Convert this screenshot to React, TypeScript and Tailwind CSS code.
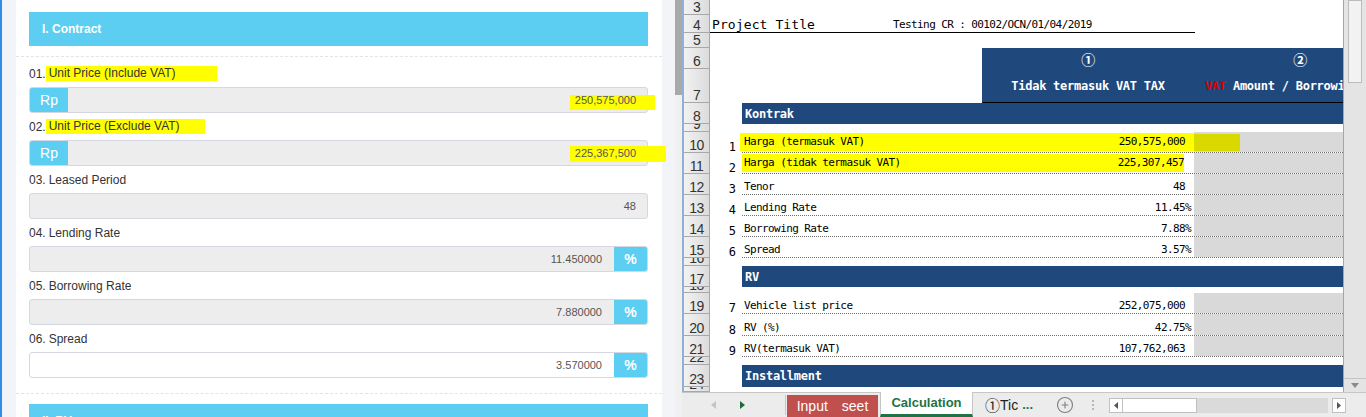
import React from "react";
import { CirclePlus } from "lucide-react";

const MONO = "font-['DejaVu_Sans_Mono','Liberation_Mono',monospace]";

type FieldProps = {
  num: string;
  label: string;
  hlClass?: string;
  value: string;
  addon?: "rp" | "pct";
  white?: boolean;
  valueHl?: string;
};

function Field({ num, label, hlClass, value, addon, white, valueHl }: FieldProps) {
  return (
    <div className="flex flex-col">
      <div className="h-[27px] flex items-center text-[12px] text-[#333]">
        <span>{num}</span>
        {hlClass ? (
          <span className={`inline-block h-[15px] leading-[15px] bg-[#ffff00] pl-[3px] ${hlClass}`}>{label}</span>
        ) : (
          <span className="pl-[3px]">{label}</span>
        )}
      </div>
      <div
        className={`relative h-[26px] flex border border-[#d5d8e0] rounded-[3px] ${white ? "bg-white" : "bg-[#ededed]"}`}
      >
        {addon === "rp" && (
          <div className="w-[38px] shrink-0 bg-[#5ccef1] rounded-l-[2px] flex items-center justify-center text-white text-[14px]">
            Rp
          </div>
        )}
        {valueHl && <div className={`absolute bg-[#ffff00] ${valueHl}`} />}
        <div
          className={`relative flex-1 flex items-center justify-end text-[11px] text-[#555] ${addon === "pct" ? "pr-[12px]" : "pr-[11px]"}`}
        >
          {value}
        </div>
        {addon === "pct" && (
          <div className="w-[33px] shrink-0 bg-[#5ccef1] rounded-r-[2px] flex items-center justify-center text-white text-[14px] font-bold">
            %
          </div>
        )}
      </div>
    </div>
  );
}

function Row({ n, h, children }: { n: number; h: string; children?: React.ReactNode }) {
  return (
    <div className={`flex shrink-0 overflow-hidden ${h}`}>
      <div className="w-[26px] shrink-0 flex items-end justify-center overflow-hidden bg-linear-to-r from-[#f2f2f2] to-[#dcdcdc] border-r border-b border-[#a8a8a8] text-[14px] leading-[13px] text-[#333] font-['Liberation_Sans',Arial,sans-serif]">
        {n}
      </div>
      <div className="flex flex-1 min-w-0 overflow-hidden">{children}</div>
    </div>
  );
}

type DR = {
  n: number;
  h: string;
  num: string;
  label: string;
  value: string;
  pct?: boolean;
  hl?: "full" | "part";
};

function DataRow({ n, h, num, label, value, pct, hl }: DR) {
  const inner =
    hl === "full"
      ? "w-[454px] h-[18px] items-center -ml-[2px] pl-[4px] pr-[9px] bg-[#ffff00]"
      : hl === "part"
        ? "w-[442px] h-[18px] items-center pl-[2px] bg-[#ffff00]"
        : pct
          ? "w-[452px] items-end pl-[2px] pr-[3px]"
          : "w-[452px] items-end pl-[2px] pr-[9px]";
  return (
    <Row n={n} h={h}>
      <div className="w-[12px] shrink-0" />
      <div className="w-[20px] shrink-0 flex items-end justify-center">
        <span className="text-[12px] leading-[11px]">{num}</span>
      </div>
      <div className="flex flex-1 border-b border-dotted border-[#6e6e6e]">
        <div className={`w-[452px] shrink-0 flex ${hl ? "items-center" : "items-end"}`}>
          <div className={`flex justify-between whitespace-nowrap leading-[14px] ${inner}`}>
            <span>{label}</span>
            <span>{value}</span>
          </div>
        </div>
        <div className="flex-1 bg-[#d9d9d9] flex items-center">
          {hl === "full" && <div className="w-[46px] h-[17px] bg-[#d9d900]" />}
        </div>
      </div>
    </Row>
  );
}

function Band({ n, h, text }: { n: number; h: string; text: string }) {
  return (
    <Row n={n} h={h}>
      <div className="w-[32px] shrink-0" />
      <div className="flex-1 bg-[#1f497d] flex items-center pl-[3px] text-white font-bold text-[12px] tracking-[-0.25px]">
        {text}
      </div>
    </Row>
  );
}

export default function App() {
  const rows1: DR[] = [
    { n: 10, h: "h-[21px]", num: "1", label: "Harga (termasuk VAT)", value: "250,575,000", hl: "full" },
    { n: 11, h: "h-[21px]", num: "2", label: "Harga (tidak termasuk VAT)", value: "225,307,457", hl: "part" },
    { n: 12, h: "h-[21px]", num: "3", label: "Tenor", value: "48" },
    { n: 13, h: "h-[21px]", num: "4", label: "Lending Rate", value: "11.45%", pct: true },
    { n: 14, h: "h-[21px]", num: "5", label: "Borrowing Rate", value: "7.88%", pct: true },
    { n: 15, h: "h-[21px]", num: "6", label: "Spread", value: "3.57%", pct: true },
  ];
  const rows2: DR[] = [
    { n: 19, h: "h-[21px]", num: "7", label: "Vehicle list price", value: "252,075,000" },
    { n: 20, h: "h-[22px]", num: "8", label: "RV (%)", value: "42.75%", pct: true },
    { n: 21, h: "h-[21px]", num: "9", label: "RV(termasuk VAT)", value: "107,762,063" },
  ];

  return (
    <div className="flex h-[417px] w-[1366px] overflow-hidden bg-white font-['Liberation_Sans',Arial,sans-serif]">
      {/* LEFT: web form */}
      <div className="flex w-[682px] shrink-0">
        <div className="w-[2px] shrink-0 bg-[#2f8fe8]" />
        <div className="w-[14px] shrink-0 bg-[#f3f4f8]" />
        <div className="w-[646px] shrink-0 bg-white flex flex-col">
          <div className="pl-[13px] pr-[14px] pt-[12px]">
            <div className="h-[34px] bg-[#5ccef1] flex items-center pl-[13px] text-white font-bold text-[12px]">
              I. Contract
            </div>
          </div>
          <div className="mt-[10px] border-t border-dashed border-[#e2e4ea]" />
          <div className="pl-[13px] pr-[14px] pt-[3px] flex flex-col">
            <Field
              num="01."
              label="Unit Price (Include VAT)"
              hlClass="w-[171px]"
              value="250,575,000"
              addon="rp"
              valueHl="left-[540px] top-[7px] w-[85px] h-[15px]"
            />
            <Field
              num="02."
              label="Unit Price (Exclude VAT)"
              hlClass="w-[159px]"
              value="225,367,500"
              addon="rp"
              valueHl="left-[540px] top-[5px] w-[96px] h-[16px]"
            />
            <Field num="03." label="Leased Period" value="48" />
            <Field num="04." label="Lending Rate" value="11.450000" addon="pct" />
            <Field num="05." label="Borrowing Rate" value="7.880000" addon="pct" />
            <Field num="06." label="Spread" value="3.570000" addon="pct" white />
          </div>
          <div className="mt-[15px] border-t border-dashed border-[#e2e4ea]" />
          <div className="pl-[13px] pr-[14px] pt-[10px]">
            <div className="h-[34px] bg-[#5ccef1] flex items-center pl-[13px] text-white font-bold text-[12px]">
              II. RV
            </div>
          </div>
        </div>
        <div className="w-[13px] shrink-0 bg-[#f3f4f8]" />
        <div className="w-[7px] shrink-0 bg-[#f0f0f0] flex flex-col">
          <div className="h-[95px] bg-[#a9a9a9]" />
        </div>
      </div>

      {/* RIGHT: spreadsheet */}
      <div className={`flex flex-col w-[684px] shrink-0 ${MONO} text-[11px] tracking-[-0.6px] text-black`}>
        <div className="flex h-[392px] overflow-hidden">
          <div className="w-[2px] shrink-0 bg-[#8fb1d9]" />
          <div className="w-[659px] shrink-0 flex flex-col overflow-hidden">
            <Row n={3} h="h-[15px]" />
            <Row n={4} h="h-[18px]">
              <div className="w-[485px] shrink-0 border-b border-black flex items-end whitespace-nowrap leading-[15px]">
                <span className="w-[183px] shrink-0 pl-[2px] text-[13px] tracking-[0.1px]">Project Title</span>
                <span>Testing CR : 00102/OCN/01/04/2019</span>
              </div>
            </Row>
            <Row n={5} h="h-[15px]" />
            <Row n={6} h="h-[21px]">
              <div className="w-[272px] shrink-0" />
              <div className="w-[212px] shrink-0 bg-[#1f497d] flex items-center justify-center pt-[2px] text-white text-[14px] font-bold font-['Noto_Sans_CJK_JP',sans-serif]">
                ①
              </div>
              <div className="w-[212px] shrink-0 bg-[#1f497d] flex items-center justify-center pt-[2px] text-white text-[14px] font-bold font-['Noto_Sans_CJK_JP',sans-serif]">
                ②
              </div>
            </Row>
            <Row n={7} h="h-[34px]">
              <div className="w-[272px] shrink-0" />
              <div className="w-[212px] shrink-0 bg-[#1f497d] border-b border-black flex items-center justify-center text-white font-bold text-[12px] tracking-[-0.25px] whitespace-nowrap">
                Tidak termasuk VAT TAX
              </div>
              <div className="w-[212px] shrink-0 bg-[#1f497d] border-b border-black flex items-center pl-[11px] text-white font-bold text-[12px] tracking-[-0.25px] whitespace-nowrap">
                <span className="text-[#d40000]">VAT</span>
                <span>&nbsp;Amount / Borrowing Rate</span>
              </div>
            </Row>
            <Band n={8} h="h-[21px]" text="Kontrak" />
            <Row n={9} h="h-[8px]" />
            {rows1.map((r) => (
              <DataRow key={r.n} {...r} />
            ))}
            <Row n={16} h="h-[8px]" />
            <Band n={17} h="h-[21px]" text="RV" />
            <Row n={18} h="h-[6px]" />
            {rows2.map((r) => (
              <DataRow key={r.n} {...r} />
            ))}
            <Row n={22} h="h-[8px]" />
            <Band n={23} h="h-[22px]" text="Installment" />
            <Row n={24} h="h-[5px]" />
          </div>
          {/* vertical scrollbar */}
          <div className="w-[23px] shrink-0 border-l border-[#a6a6a6] bg-[#e4e4e4] flex flex-col justify-between">
            <div className="mx-[4px] h-[83px] bg-[#f2f2f2] border border-[#bcbcbc]" />
            <div className="h-[14px] border-t border-[#c4c4c4] flex items-center justify-center">
              <svg width="8" height="5" viewBox="0 0 8 5">
                <path d="M0 0 L8 0 L4 5 Z" fill="#8a8a8a" />
              </svg>
            </div>
          </div>
        </div>

        {/* sheet tab bar */}
        <div className="h-[25px] flex items-stretch bg-[#ececec] border-t border-[#c6c6c6] font-['Liberation_Sans','Noto_Sans_CJK_JP',sans-serif] tracking-normal text-[14px]">
          <div className="w-[103px] shrink-0 flex items-center pl-[29px] gap-[24px]">
            <svg width="5" height="8" viewBox="0 0 5 8">
              <path d="M5 0 L0 4 L5 8 Z" fill="#c4c4c4" />
            </svg>
            <svg width="5" height="8" viewBox="0 0 5 8">
              <path d="M0 0 L5 4 L0 8 Z" fill="#1e6b3a" />
            </svg>
          </div>
          <div className="w-[1px] shrink-0 bg-[#c6c6c6] my-[2px]" />
          <div className="w-[1px] shrink-0" />
          <div className="w-[91px] shrink-0 mt-[2px] bg-[#c0504d] flex items-center justify-center text-white whitespace-nowrap">
            Input{"\u3000"}seet
          </div>
          <div className="w-[2px] shrink-0" />
          <div className="w-[93px] shrink-0 -mt-[1px] bg-white border-x border-[#c6c6c6] border-b-[3px] border-b-[#217346] flex items-center justify-center text-[#217346] font-bold text-[13px]">
            Calculation
          </div>
          <div className="w-[2px] shrink-0" />
          <div className="w-[77px] shrink-0 flex items-center pl-[10px] whitespace-nowrap text-[#222]">
            <span className="font-['Noto_Sans_CJK_JP',sans-serif] text-[15px]">①</span>
            <span>Tic</span>
            <span className="ml-[4px] text-[#217346] font-bold text-[13px]">...</span>
          </div>
          <div className="w-[26px] shrink-0 flex items-center justify-center">
            <CirclePlus size={18} color="#808080" strokeWidth={1.5} />
          </div>
          <div className="w-[30px] shrink-0 flex flex-col items-center justify-center gap-[2px]">
            <div className="w-[2px] h-[2px] bg-[#b8b8b8]" />
            <div className="w-[2px] h-[2px] bg-[#b8b8b8]" />
            <div className="w-[2px] h-[2px] bg-[#b8b8b8]" />
          </div>
          <div className="w-[1px] shrink-0" />
          <div className="w-[237px] shrink-0 flex items-center">
            <div className="flex h-[15px] w-full items-stretch">
              <div className="w-[14px] shrink-0 bg-white border border-[#c0c0c0] flex items-center justify-center">
                <svg width="4" height="7" viewBox="0 0 4 7">
                  <path d="M4 0 L0 3.5 L4 7 Z" fill="#555" />
                </svg>
              </div>
              <div className="w-[74px] shrink-0 bg-white border border-[#c0c0c0] border-l-0" />
              <div className="w-[131px] shrink-0 bg-[#dadada]" />
              <div className="w-[4px] shrink-0" />
              <div className="w-[14px] shrink-0 bg-white border border-[#c0c0c0] flex items-center justify-center">
                <svg width="4" height="7" viewBox="0 0 4 7">
                  <path d="M0 0 L4 3.5 L0 7 Z" fill="#555" />
                </svg>
              </div>
            </div>
          </div>
          <div className="flex-1" />
        </div>
      </div>
    </div>
  );
}
